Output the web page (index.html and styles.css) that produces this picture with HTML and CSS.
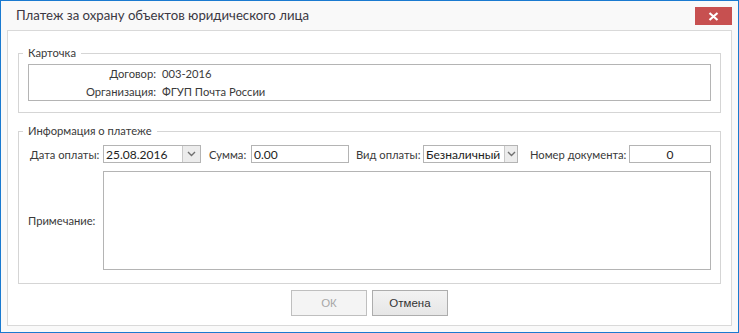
FILE: index.html
```html
<!DOCTYPE html>
<html lang="ru">
<head>
<meta charset="utf-8">
<title>Платеж за охрану объектов юридического лица</title>
<link rel="stylesheet" href="styles.css">
</head>
<body>
<div class="window">
  <div class="titlebar">
    <div class="title">Платеж за охрану объектов юридического лица</div>
    <div class="close">
      <svg width="11" height="9" viewBox="0 0 11 9"><path d="M1.5 1 L9.5 8 M9.5 1 L1.5 8" stroke="#fff" stroke-width="2.2" fill="none"/></svg>
    </div>
  </div>
  <div class="panel">
    <fieldset class="group card">
      <legend>Карточка</legend>
      <div class="infobox">
        <span class="lbl">Договор:</span><span class="val">003-2016</span>
        <span class="lbl">Организация:</span><span class="val">ФГУП Почта России</span>
      </div>
    </fieldset>
    <fieldset class="group pay">
      <legend>Информация о платеже</legend>
      <div class="row">
        <span class="flabel l-date">Дата оплаты:</span>
        <div class="combo date"><span class="ctext">25.08.2016</span><span class="cbtn"><svg width="9" height="6" viewBox="0 0 9 6"><path d="M1 1 L4.5 4.5 L8 1" stroke="#707070" stroke-width="1.4" fill="none"/></svg></span></div>
        <span class="flabel l-sum">Сумма:</span>
        <div class="input sumin">0.00</div>
        <span class="flabel l-kind">Вид оплаты:</span>
        <div class="combo kindc"><span class="ctext">Безналичный</span><span class="cbtn"><svg width="9" height="6" viewBox="0 0 9 6"><path d="M1 1 L4.5 4.5 L8 1" stroke="#707070" stroke-width="1.4" fill="none"/></svg></span></div>
        <span class="flabel l-num">Номер документа:</span>
        <div class="input numin">0</div>
      </div>
      <div class="memo-row">
        <span class="flabel memo-l">Примечание:</span>
        <div class="memo"></div>
      </div>
    </fieldset>
    <div class="buttons">
      <button class="btn" disabled>ОК</button>
      <button class="btn">Отмена</button>
    </div>
  </div>
</div>
</body>
</html>
```

FILE: styles.css
```css
html, body {
  margin: 0;
  padding: 0;
  background: #ffffff;
}
body {
  font-family: "Lato", "Noto Sans", sans-serif;
  font-size: 11.2px;
  color: #3a3a3a;
}
.window {
  width: 739px;
  height: 333px;
  box-sizing: border-box;
  border: 1px solid #1a7ad0;
  background: #f9f9f9;
  display: flex;
  flex-direction: column;
}
.titlebar {
  height: 29px;
  flex: none;
  display: flex;
  justify-content: space-between;
  align-items: flex-start;
  padding: 0 6px 0 15px;
}
.title {
  font-size: 13.2px;
  line-height: 29px;
  color: #3b3843;
}
.close {
  margin-top: 6px;
  width: 37px;
  height: 18px;
  background: #c75050;
  display: flex;
  align-items: center;
  justify-content: center;
}
.panel {
  flex: 1;
  margin: 0 6px 6px 6px;
  border: 1px solid #d9d9d9;
  background: #ffffff;
  display: flex;
  flex-direction: column;
  padding: 0 10px;
}
.group {
  margin: 0;
  border: 1px solid #d5d5d5;
  padding: 0 9px;
  min-width: 0;
}
.group legend {
  padding: 0 5px 0 5px;
  margin-left: -5px;
  line-height: 16px;
  color: #3a3a3a;
}
.card {
  margin-top: 14px;
  padding-top: 3px;
  padding-bottom: 11px;
}
.infobox {
  height: 37px;
  box-sizing: border-box;
  border: 1px solid #b4b4b4;
  display: grid;
  grid-template-columns: 127px 1fr;
  column-gap: 6px;
  line-height: 18px;
  align-content: start;
}
.lbl {
  text-align: right;
}
.pay {
  margin-top: 10px;
  padding: 6px 9px 13px 9px;
}
.row {
  display: flex;
  align-items: center;
  height: 18px;
  padding-left: 2px;
}
.flabel {
  white-space: nowrap;
  flex: none;
}
.l-date { width: 73px; }
.l-sum { width: 42px; margin-left: 8px; }
.l-kind { width: 67px; margin-left: 7px; }
.l-num { width: 99px; margin-left: 12px; }
.combo, .input {
  height: 18px;
  box-sizing: border-box;
  border: 1px solid #b4b4b4;
  display: flex;
  align-items: center;
  background: #fff;
  flex: none;
  color: #222;
  font-size: 12px;
}
.ctext {
  flex: 1;
  padding-left: 2px;
}
.cbtn {
  width: 17px;
  align-self: stretch;
  border-left: 1px solid #c8c8c8;
  background: #ececec;
  display: flex;
  align-items: center;
  justify-content: center;
}
.date { width: 98px; }
.kindc { width: 95px; }
.kindc .cbtn { width: 12px; }
.sumin {
  width: 98px;
  padding-left: 2px;
}
.numin {
  width: 82px;
  justify-content: center;
}
.memo-row {
  display: flex;
  align-items: center;
  margin-top: 8px;
}
.memo-l {
  width: 75px;
}
.memo {
  width: 608px;
  height: 99px;
  box-sizing: border-box;
  border: 1px solid #b4b4b4;
}
.buttons {
  display: flex;
  justify-content: center;
  gap: 5px;
  margin-top: 6px;
}
.btn {
  width: 76px;
  height: 26px;
  box-sizing: border-box;
  border: 1px solid #adadad;
  background: linear-gradient(#f2f2f2, #e6e6e6);
  font-family: "Liberation Sans", sans-serif;
  font-size: 11.5px;
  color: #333;
  padding: 0;
  border-radius: 0;
}
.btn:disabled {
  color: #a8a8a8;
  border-color: #bfbfbf;
  background: #f4f4f4;
}
```
